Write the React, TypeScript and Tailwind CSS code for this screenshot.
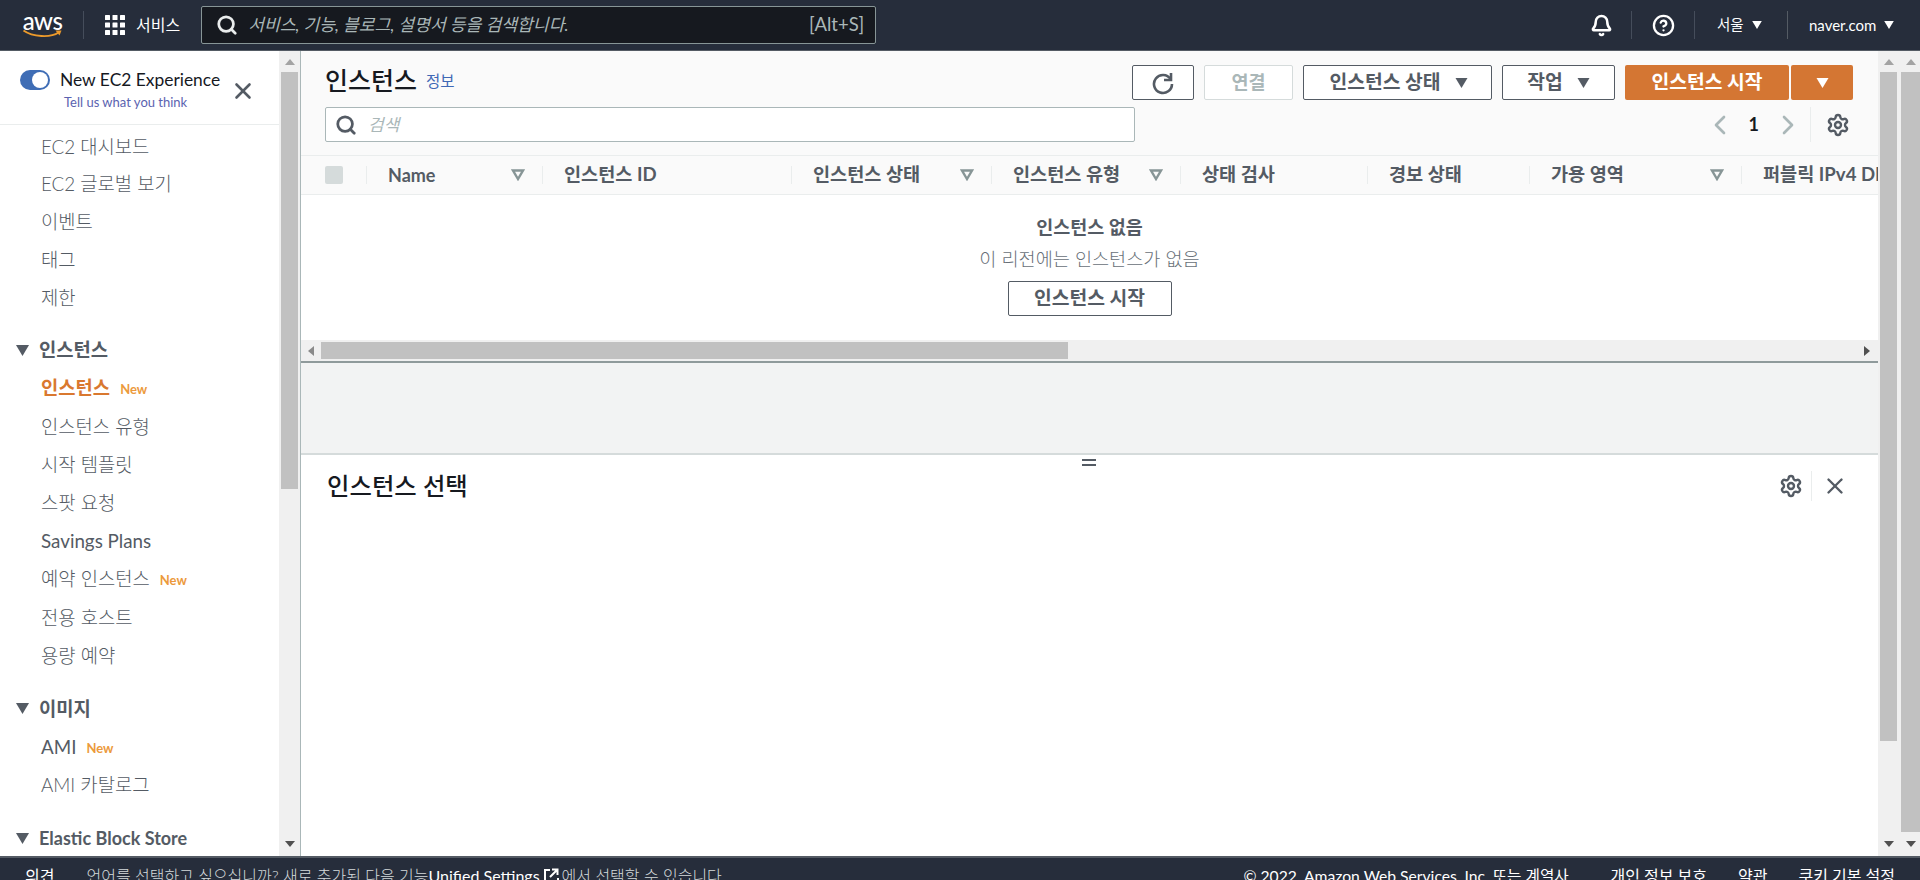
import { Bell, ChevronLeft, ChevronRight, CircleHelp, Search, Settings, X } from 'lucide-react'

const columns = [
  { label: 'Name', width: 'w-[176px]', sort: true },
  { label: '인스턴스 ID', width: 'w-[249px]', sort: false },
  { label: '인스턴스 상태', width: 'w-[200px]', sort: true },
  { label: '인스턴스 유형', width: 'w-[189px]', sort: true },
  { label: '상태 검사', width: 'w-[187px]', sort: false },
  { label: '경보 상태', width: 'w-[162px]', sort: false },
  { label: '가용 영역', width: 'w-[212px]', sort: true },
  { label: '퍼블릭 IPv4 DNS', width: 'w-[220px]', sort: false },
]

const navGroups = [
  {
    items: [{ label: 'EC2 대시보드' }, { label: 'EC2 글로벌 보기' }, { label: '이벤트' }, { label: '태그' }, { label: '제한' }],
  },
  {
    title: '인스턴스',
    items: [
      { label: '인스턴스', isNew: true, active: true },
      { label: '인스턴스 유형' },
      { label: '시작 템플릿' },
      { label: '스팟 요청' },
      { label: 'Savings Plans', latin: true },
      { label: '예약 인스턴스', isNew: true },
      { label: '전용 호스트' },
      { label: '용량 예약' },
    ],
  },
  {
    title: '이미지',
    items: [{ label: 'AMI', isNew: true, latin: true }, { label: 'AMI 카탈로그' }],
  },
  { title: 'Elastic Block Store', items: [] },
]

function Caret({ className }: { className: string }) {
  return (
    <svg viewBox="0 0 12 10" className={className} fill="currentColor">
      <path d="M0 0h12L6 10z" />
    </svg>
  )
}

function SortIcon() {
  return (
    <svg viewBox="0 0 14 12" className="h-[12px] w-[14px] text-[#879596]" fill="none" stroke="currentColor" strokeWidth="2.4">
      <path d="M2 1.5h10L7 10z" />
    </svg>
  )
}

function Gear({ className }: { className: string }) {
  return <Settings strokeWidth={2.4} className={className} />
}

function Scrollbar({ thumb, full }: { thumb: string; full?: boolean }) {
  return (
    <div className={`flex h-full w-[21px] shrink-0 flex-col items-center bg-[#f0f0f0] ${full ? 'pl-[2px]' : ''}`}>
      <div className="flex h-[21px] items-center justify-center">
        <svg viewBox="0 0 10 6" className="h-[6px] w-[10px] text-[#a3a3a3]" fill="currentColor"><path d="M5 0l5 6H0z" /></svg>
      </div>
      <div className={`bg-[#c1c1c1] ${full ? 'w-full' : 'w-[17px]'} ${thumb}`} />
      <div className="mt-auto flex h-[24px] items-center justify-center">
        <svg viewBox="0 0 10 6" className="h-[6px] w-[10px] text-[#505050]" fill="currentColor"><path d="M0 0h10L5 6z" /></svg>
      </div>
    </div>
  )
}

function Header() {
  return (
    <header className="flex h-[51px] shrink-0 items-center border-b border-[#545b64] bg-[#262d3b] text-white">
      <div className="ml-[22px] flex w-[41px] flex-col items-center">
        <span className="text-[24px] leading-[18px] font-medium tracking-[-0.5px]">aws</span>
        <svg viewBox="0 0 40 9" className="mt-[-1px] h-[9px] w-[41px]" fill="none">
          <path d="M1 1.5C10 8 28 9 36 3.5" stroke="#ec9a2b" strokeWidth="1.8" />
          <path d="M33 1.5h6l-2 5z" fill="#ec9a2b" />
        </svg>
      </div>
      <div className="ml-[20px] h-[28px] w-px bg-[#454d5b]" />
      <svg viewBox="0 0 20 20" className="ml-[21px] h-[20px] w-[20px]" fill="currentColor">
        {[0, 7.5, 15].map((y) =>
          [0, 7.5, 15].map((x) => <rect key={`${x}-${y}`} x={x} y={y} width="5" height="5" rx="0.5" />),
        )}
      </svg>
      <span className="ml-[11px] text-[16px]">서비스</span>
      <div className="ml-[21px] flex h-[38px] w-[675px] items-center rounded-[2px] border border-[#879596] bg-[#16191f] pr-[11px] pl-[14px]">
        <Search size={22} strokeWidth={3} className="text-[#eaeded]" />
        <span className="ml-[10px] text-[17.2px] text-[#aab7b8] italic">서비스, 기능, 블로그, 설명서 등을 검색합니다.</span>
        <span className="ml-auto text-[18.5px] text-[#aab7b8]">[Alt+S]</span>
      </div>
      <div className="ml-auto flex h-[28px] items-center">
        <div className="flex w-[60px] justify-center"><Bell size={23} strokeWidth={2.6} /></div>
        <div className="h-full w-px bg-[#454d5b]" />
        <div className="flex w-[62px] justify-center"><CircleHelp size={23} strokeWidth={2.4} /></div>
        <div className="h-full w-px bg-[#454d5b]" />
        <div className="flex w-[92px] items-center pl-[22px] text-[14.5px]">
          서울
          <Caret className="ml-[8px] h-[8px] w-[10px]" />
        </div>
        <div className="h-full w-px bg-[#545b64]" />
        <div className="flex w-[132px] items-center pl-[21px] text-[15px]">
          naver.com
          <Caret className="ml-[8px] h-[8px] w-[10px]" />
        </div>
      </div>
    </header>
  )
}

function Sidebar() {
  return (
    <aside className="flex h-full w-[301px] shrink-0 border-r border-[#aab7b8]">
      <div className="w-[279px] shrink-0 overflow-hidden">
        <div className="flex h-[74px] items-start border-b border-[#eaeded] pt-[19px] pl-[20px]">
          <div className="flex h-[20px] w-[30px] shrink-0 items-center justify-end rounded-full bg-[#3f6db5] pr-[2px]">
            <div className="h-[16px] w-[16px] rounded-full bg-white" />
          </div>
          <div className="ml-[10px] flex w-[160px] flex-col items-start">
            <span className="text-[17.4px] leading-[20px] whitespace-nowrap text-[#16191f]">New EC2 Experience</span>
            <span className="mt-[3px] ml-[4px] text-[13px] leading-[18px] whitespace-nowrap text-[#5a62b0]">Tell us what you think</span>
          </div>
          <X size={26} strokeWidth={2.4} className="mt-[8px] ml-[10px] text-[#545b64]" />
        </div>
        <nav className="pt-[3px]">
          {navGroups.map((group, i) => (
            <div key={i} className={i > 0 ? 'mt-[15px]' : ''}>
              {group.title && (
                <div className="flex h-[38px] items-center pl-[16px] text-[18.8px] font-bold text-[#545b64]">
                  <Caret className="mr-[10px] h-[11px] w-[13px]" />
                  <span className={group.title.startsWith('Elastic') ? 'text-[18px]' : ''}>{group.title}</span>
                </div>
              )}
              {group.items.map((item) => (
                <div key={item.label} className={`flex items-center pl-[41px] text-[18.8px] ${group.title ? 'h-[38.2px]' : 'h-[37.7px]'} ${item.active ? 'font-bold text-[#d9782f]' : item.latin ? 'font-normal text-[#545b64]' : 'font-light text-[#545b64]'}`}>
                  {item.label}
                  {item.isNew && <span className="ml-[10px] pt-[3px] text-[13px] font-bold text-[#ec9a3c]">New</span>}
                </div>
              ))}
            </div>
          ))}
        </nav>
      </div>
      <Scrollbar thumb="h-[417px]" />
    </aside>
  )
}

function Toolbar() {
  const btn = 'flex h-[35px] items-center justify-center rounded-[2px] border border-[#545b64] bg-white text-[19.3px] font-bold text-[#545b64]'
  return (
    <div className="h-[104px] shrink-0 bg-[#fafafa] px-[24px] pt-[14px]">
      <div className="flex items-start justify-between pr-[1px]">
        <div className="flex items-center">
          <h1 className="text-[25px] leading-[30px] font-medium text-[#16191f]">인스턴스</h1>
          <span className="mt-[3px] ml-[9px] text-[15.5px] text-[#3f68b5]">정보</span>
        </div>
        <div className="flex gap-[10px]">
          <button className={`${btn} w-[62px]`}>
            <svg viewBox="0 0 24 24" className="h-[24px] w-[24px]" fill="none" stroke="currentColor" strokeWidth="2.6">
              <path d="M19.5 8A9 9 0 1 0 21 13" />
              <path d="M20 2v7h-7" />
            </svg>
          </button>
          <button className="flex h-[35px] w-[89px] items-center justify-center rounded-[2px] border border-[#d5dbdb] bg-white text-[18.5px] font-bold text-[#aab7b8]">연결</button>
          <button className={`${btn} w-[189px] gap-[14px] pl-[2px]`}>
            인스턴스 상태 <Caret className="h-[10px] w-[13px]" />
          </button>
          <button className={`${btn} w-[113px] gap-[14px]`}>
            작업 <Caret className="h-[10px] w-[13px]" />
          </button>
          <div className="flex gap-[2px]">
            <button className="flex h-[35px] w-[164px] items-center justify-center rounded-[2px] bg-[#d47633] text-[19.3px] font-bold text-white">인스턴스 시작</button>
            <button className="flex h-[35px] w-[62px] items-center justify-center rounded-[2px] bg-[#d47633] text-white">
              <Caret className="h-[10px] w-[13px]" />
            </button>
          </div>
        </div>
      </div>
      <div className="mt-[7px] flex items-center justify-between">
        <div className="flex h-[35px] w-[810px] items-center rounded-[2px] border border-[#aab7b8] bg-white pl-[9px]">
          <Search size={22} strokeWidth={3} className="text-[#545b64]" />
          <span className="ml-[11px] text-[17px] text-[#aab7b8] italic">검색</span>
        </div>
        <div className="flex h-[35px] items-center">
          <ChevronLeft size={32} strokeWidth={2} className="text-[#aab7b8]" />
          <span className="mx-[13px] text-[18px] font-bold text-[#16191f]">1</span>
          <ChevronRight size={32} strokeWidth={2} className="text-[#aab7b8]" />
          <div className="mr-[15px] ml-[6px] h-full w-px bg-[#eaeded]" />
          <Gear className="mr-[4px] h-[24px] w-[24px] text-[#545b64]" />
        </div>
      </div>
    </div>
  )
}

function InstanceTable() {
  return (
    <div className="w-full overflow-hidden">
      <div className="flex h-[40px] border-y border-[#eaeded] bg-[#fafafa] text-[18.6px] font-bold whitespace-nowrap text-[#545b64]">
        <div className="flex w-[65px] shrink-0 items-center pl-[24px]">
          <div className="h-[18px] w-[18px] rounded-[2px] bg-[#d5dbdb]" />
        </div>
        {columns.map((col) => (
          <div key={col.label} className={`relative flex shrink-0 items-center pr-[17px] pl-[22px] ${col.width}`}>
            <div className="absolute top-[10px] left-0 h-[18px] w-px bg-[#eaeded]" />
            <span className={col.label === 'Name' ? 'text-[18px]' : ''}>{col.label}</span>
            {col.sort && <span className="ml-auto"><SortIcon /></span>}
          </div>
        ))}
      </div>
      <div className="flex h-[145px] flex-col items-center bg-white pt-[18px]">
        <div className="text-[18.5px] leading-[28px] font-bold text-[#545b64]">인스턴스 없음</div>
        <div className="mt-[4px] text-[18.6px] leading-[28px] font-light text-[#687078]">이 리전에는 인스턴스가 없음</div>
        <button className="mt-[8px] flex h-[35px] w-[164px] items-center justify-center rounded-[2px] border border-[#545b64] bg-white text-[19.3px] font-bold text-[#545b64]">인스턴스 시작</button>
      </div>
      <div className="flex h-[23px] items-start border-b-2 border-[#8f9a9b] bg-[#f0f0f0] pt-[2px]">
        <div className="flex h-[17px] w-[20px] items-center justify-center">
          <svg viewBox="0 0 6 10" className="h-[10px] w-[6px] text-[#8a8a8a]" fill="currentColor"><path d="M6 0v10L0 5z" /></svg>
        </div>
        <div className="h-[17px] w-[747px] bg-[#c1c1c1]" />
        <div className="mr-[8px] ml-auto flex h-[17px] items-center">
          <svg viewBox="0 0 6 10" className="h-[10px] w-[6px] text-[#505050]" fill="currentColor"><path d="M0 0v10l6-5z" /></svg>
        </div>
      </div>
    </div>
  )
}

function DetailPanel() {
  return (
    <div className="relative flex-1 bg-white">
      <div className="absolute top-[4px] left-[781px] flex w-[14px] flex-col gap-[3px]">
        <div className="h-[2px] bg-[#545b64]" />
        <div className="h-[2px] bg-[#545b64]" />
      </div>
      <div className="flex items-center justify-between pt-[15px] pr-[30px] pl-[26px]">
        <h2 className="text-[24.4px] leading-[32px] font-medium text-[#16191f]">인스턴스 선택</h2>
        <div className="flex items-center">
          <Gear className="mr-[-2px] h-[24px] w-[24px] text-[#545b64]" />
          <div className="mr-[10px] ml-[10px] h-[30px] w-px bg-[#eaeded]" />
          <X size={26} strokeWidth={2.2} className="text-[#545b64]" />
        </div>
      </div>
    </div>
  )
}

function Footer() {
  return (
    <footer className="flex h-[24px] shrink-0 items-start overflow-hidden border-t-2 border-[#545b64] bg-[#262d3b] pt-[6px] text-[16px] leading-[24px] whitespace-nowrap text-white">
      <span className="ml-[25px]">의견</span>
      <span className="ml-[32px] font-light text-[#d5dbdb]">언어를 선택하고 싶으십니까? 새로 추가된 다음 기능</span>
      <span>Unified Settings</span>
      <svg viewBox="0 0 16 16" className="mx-[3px] mt-[4px] h-[16px] w-[16px]" fill="none" stroke="currentColor" strokeWidth="2">
        <path d="M7 2H2v13h13v-5M9 1.5h5.5V7M14 2L7 9" />
      </svg>
      <span className="font-light text-[#d5dbdb]">에서 선택할 수 있습니다.</span>
      <span className="ml-auto text-[15.7px]">© 2022, Amazon Web Services, Inc. 또는 계열사.</span>
      <span className="ml-[38px]">개인 정보 보호</span>
      <span className="ml-[31px]">약관</span>
      <span className="mr-[25px] ml-[31px]">쿠키 기본 설정</span>
    </footer>
  )
}

export default function App() {
  return (
    <div className="flex h-[880px] w-[1920px] flex-col overflow-hidden bg-white font-['Lato','Noto_Sans_CJK_KR',sans-serif]">
      <Header />
      <div className="flex min-h-0 flex-1">
        <Sidebar />
        <main className="flex w-[1577px] shrink-0 flex-col">
          <Toolbar />
          <InstanceTable />
          <div className="h-[92px] shrink-0 border-b-2 border-[#d5dbdb] bg-[#f2f3f3]" />
          <DetailPanel />
        </main>
        <Scrollbar thumb="h-[669px]" />
        <Scrollbar thumb="h-[760px]" full />
      </div>
      <Footer />
    </div>
  )
}
